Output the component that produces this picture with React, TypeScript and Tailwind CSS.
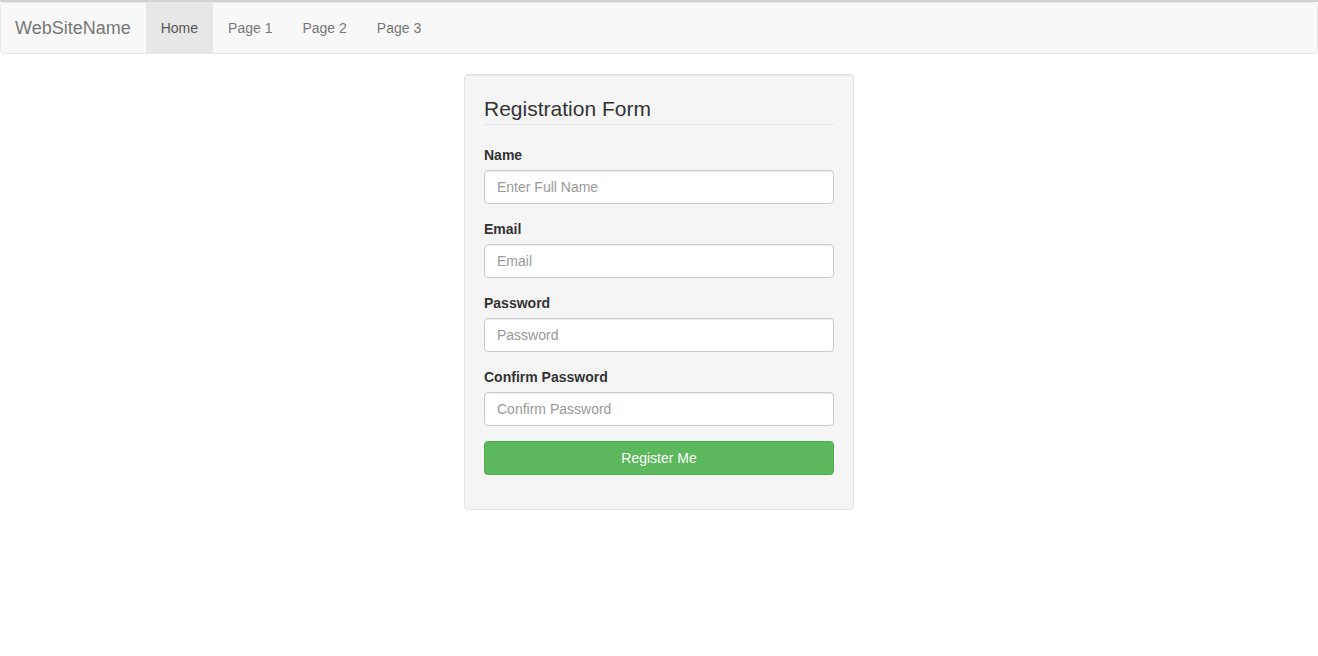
import React from 'react';

const fields = [
  { label: 'Name', placeholder: 'Enter Full Name', type: 'text' },
  { label: 'Email', placeholder: 'Email', type: 'email' },
  { label: 'Password', placeholder: 'Password', type: 'password' },
  { label: 'Confirm Password', placeholder: 'Confirm Password', type: 'password' },
];

const links = ['Home', 'Page 1', 'Page 2', 'Page 3'];

const App: React.FC = () => {
  return (
    <div className="min-h-screen bg-white text-[14px] leading-[20px] text-[#333]" style={{ fontFamily: '"Liberation Sans", Arial, sans-serif' }}>
      <div className="h-[2px] bg-[#d2d2d2]" />
      <nav className="flex h-[52px] items-stretch rounded-[4px] border border-[#e7e7e7] bg-[#f8f8f8]">
        <a href="#" className="flex items-center pl-[14px] pr-[15px] text-[18px] text-[#777]">WebSiteName</a>
        <ul className="flex">
          {links.map((l, i) => (
            <li key={l}>
              <a
                href="#"
                className={`flex h-full items-center px-[15px] ${i === 0 ? 'bg-[#e7e7e7] text-[#555]' : 'text-[#777]'}`}
              >
                {l}
              </a>
            </li>
          ))}
        </ul>
      </nav>

      <div className="mx-auto mt-[20px] w-[390px] rounded-[4px] border border-[#e3e3e3] bg-[#f5f5f5] p-[19px] shadow-[inset_0_1px_1px_rgba(0,0,0,0.05)]">
        <form onSubmit={e => e.preventDefault()}>
          <h2 className="mb-[20px] border-b border-[#e5e5e5] text-[21px] leading-[30px] text-[#333]">Registration Form</h2>
          {fields.map(f => (
            <div key={f.label} className="mb-[15px]">
              <label className="mb-[5px] block font-bold">{f.label}</label>
              <input
                type={f.type}
                placeholder={f.placeholder}
                className="block h-[34px] w-full rounded-[4px] border border-[#ccc] bg-white px-[12px] py-[6px] text-[14px] text-[#555] shadow-[inset_0_1px_1px_rgba(0,0,0,0.075)] outline-none placeholder:text-[#999]"
              />
            </div>
          ))}
          <div className="mb-[15px]">
            <button
              type="submit"
              className="block h-[34px] w-full rounded-[4px] border border-[#4cae4c] bg-[#5cb85c] text-[14px] text-white"
            >
              Register Me
            </button>
          </div>
        </form>
      </div>
    </div>
  );
};

export default App;
